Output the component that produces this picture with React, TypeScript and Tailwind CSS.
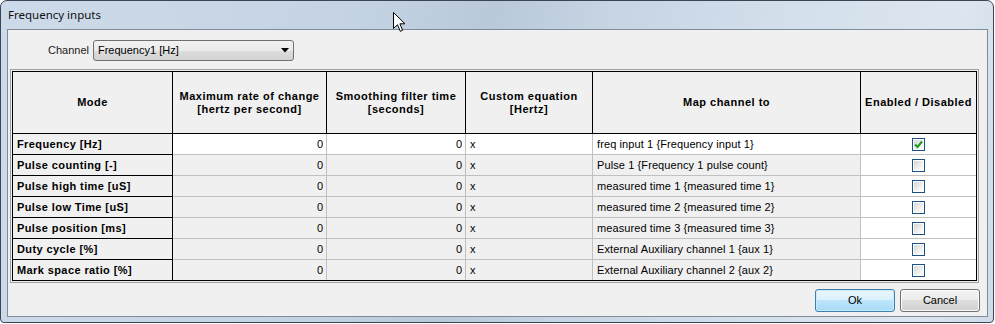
import React from "react";

const rows: { mode: string; map: string; on: boolean }[] = [
  { mode: "Frequency [Hz]", map: "freq input 1 {Frequency input 1}", on: true },
  { mode: "Pulse counting [-]", map: "Pulse 1 {Frequency 1 pulse count}", on: false },
  { mode: "Pulse high time [uS]", map: "measured time 1 {measured time 1}", on: false },
  { mode: "Pulse low Time [uS]", map: "measured time 2 {measured time 2}", on: false },
  { mode: "Pulse position [ms]", map: "measured time 3 {measured time 3}", on: false },
  { mode: "Duty cycle [%]", map: "External Auxiliary channel 1 {aux 1}", on: false },
  { mode: "Mark space ratio [%]", map: "External Auxiliary channel 2 {aux 2}", on: false },
];

function CheckBox({ checked }: { checked: boolean }) {
  return (
    <div className="w-[13px] h-[13px] border border-[#1c5180] p-px bg-white">
      <div className="w-full h-full bg-[linear-gradient(135deg,#d6d6d6,#f4f4f4_70%,#ffffff)] flex items-center justify-center">
        {checked && (
          <svg width="9" height="9" viewBox="0 0 9 9">
            <path d="M1 4.5 L3.5 7 L8 1.5" fill="none" stroke="#1f9a1f" strokeWidth="2" />
          </svg>
        )}
      </div>
    </div>
  );
}

export default function App() {
  return (
    <div className="relative w-[995px] h-[324px] bg-white font-['Liberation_Sans',Arial,sans-serif] text-[11px] text-black">
      <div className="flex flex-col w-[994px] h-[323px] border border-[#3a4654] rounded-t-[7px] rounded-b-[4px] overflow-hidden bg-[linear-gradient(100deg,#cddaea_0%,#c4d3e3_35%,#b9c9da_47%,#c6d4e3_58%,#d3dfeb_75%,#dce6f0_92%,#cfdbe8_100%)]">
        {/* title bar */}
        <div className="h-[28px] flex items-center pl-[7px] font-['Noto_Sans',sans-serif] text-[11.5px] text-[#111]">
          Frequency inputs
        </div>

        {/* client area */}
        <div className="ml-[6px] mr-[5px] mb-[5px] flex-1 border border-[#7d8b9a] bg-[#f0f0f0] flex flex-col">
          {/* channel */}
          <div className="flex items-center h-[21px] mt-[10px] pl-[40px]">
            <span className="mr-[4px] text-[#1a1a1a]">Channel</span>
            <div className="relative w-[201px] h-[21px] border border-[#707070] rounded-[3px] bg-[linear-gradient(#f2f2f2,#ebebeb_50%,#dddddd_50%,#d2d2d2)] flex items-center pl-[4px]">
              Frequency1 [Hz]
              <svg className="absolute right-[4px] top-[7px]" width="8" height="5" viewBox="0 0 8 5">
                <path d="M0 0 H8 L4 4.5 Z" fill="#000" />
              </svg>
            </div>
          </div>

          {/* grid */}
          <div className="mt-[8px] ml-[2px] w-[969px] border border-[#a0a0a0] p-px">
            <div className="border border-black flex flex-col">
              <div className="flex h-[62px] font-bold tracking-[0.5px] text-center leading-[13px]">
                <div className="w-[160px] border-r border-b border-black flex items-center justify-center">Mode</div>
                <div className="w-[154px] border-r border-b border-black flex items-center justify-center">
                  Maximum rate of change
                  <br />
                  [hertz per second]
                </div>
                <div className="w-[139px] border-r border-b border-black flex items-center justify-center">
                  Smoothing filter time
                  <br />
                  [seconds]
                </div>
                <div className="w-[127px] border-r border-b border-black flex items-center justify-center">
                  Custom equation
                  <br />
                  [Hertz]
                </div>
                <div className="w-[268px] border-r border-b border-black flex items-center justify-center">Map channel to</div>
                <div className="w-[115px] border-b border-black flex items-center justify-center">Enabled / Disabled</div>
              </div>

              {rows.map((r, i) => {
                const last = i === rows.length - 1;
                const bg = i === 0 ? "bg-white" : "bg-[#f0f0f0]";
                const b = last ? "" : "border-b";
                return (
                  <div key={r.mode} className="flex h-[21px] last:h-[20px]">
                    <div className={`w-[160px] border-r ${b} border-black pl-[4px] flex items-center font-bold tracking-[0.4px]`}>{r.mode}</div>
                    <div className={`w-[154px] border-r ${b} border-[#c0c0c0] ${bg} pr-[3px] flex items-center justify-end`}>0</div>
                    <div className={`w-[139px] border-r ${b} border-[#c0c0c0] ${bg} pr-[3px] flex items-center justify-end`}>0</div>
                    <div className={`w-[127px] border-r ${b} border-[#c0c0c0] ${bg} pl-[4px] flex items-center`}>x</div>
                    <div className={`w-[268px] border-r ${b} border-[#c0c0c0] ${bg} pl-[4px] flex items-center tracking-[0.1px]`}>{r.map}</div>
                    <div className={`w-[115px] ${b} border-[#c0c0c0] bg-white flex items-center justify-center pr-[1px]`}>
                      <CheckBox checked={r.on} />
                    </div>
                  </div>
                );
              })}
            </div>
          </div>

          {/* buttons */}
          <div className="mt-[6px] flex justify-end gap-[5px] pr-[7px]">
            <button className="w-[80px] h-[23px] rounded-[3px] border border-[#3c7fb1] bg-[linear-gradient(#eaf6fd,#d9f0fc_50%,#bee6fd_50%,#a7d9f5)] shadow-[inset_0_0_0_1px_#c6ebfd]">
              Ok
            </button>
            <button className="w-[80px] h-[23px] rounded-[3px] border border-[#707070] bg-[linear-gradient(#f2f2f2,#ebebeb_50%,#dddddd_50%,#cfcfcf)] shadow-[inset_0_0_0_1px_#fbfbfb]">
              Cancel
            </button>
          </div>
        </div>
      </div>

      {/* mouse pointer */}
      <svg className="absolute left-[393px] top-[12px]" width="13" height="21" viewBox="0 0 13 21">
        <path d="M0.5 0.5 V16.5 L4.5 12.7 L7.3 19.3 L9.6 18.3 L6.9 11.8 H12 Z" fill="#fff" stroke="#000" strokeWidth="1" strokeLinejoin="round" />
      </svg>
    </div>
  );
}
